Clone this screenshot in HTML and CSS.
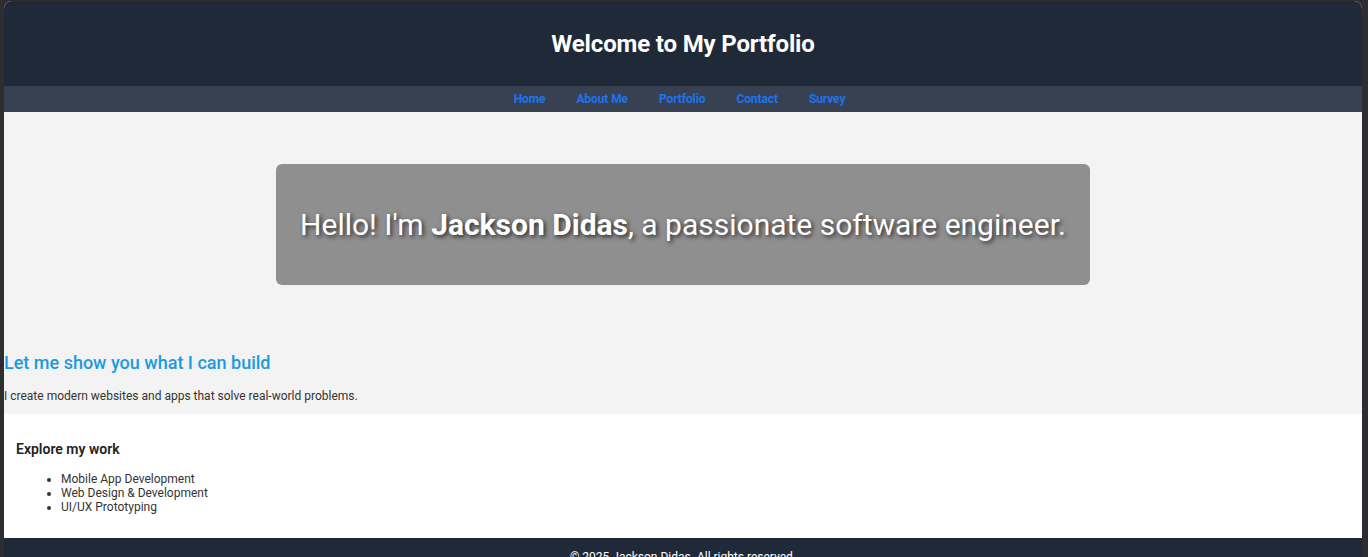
FILE: index.html
```html
<!DOCTYPE html>
<html lang="en">
<head>
<meta charset="utf-8">
<title>Jackson Didas Portfolio</title>
<link rel="stylesheet" href="styles.css">
</head>
<body>
<div class="page">
  <header class="site-header">
    <h1>Welcome to My Portfolio</h1>
  </header>
  <nav class="site-nav">
    <a href="#">Home</a>
    <a href="#">About Me</a>
    <a href="#">Portfolio</a>
    <a href="#">Contact</a>
    <a href="#">Survey</a>
  </nav>
  <main class="intro">
    <div class="hero">
      <p>Hello! I'm <strong>Jackson Didas</strong>, a passionate software engineer.</p>
    </div>
    <h2 class="intro-title">Let me show you what I can build</h2>
    <p class="intro-text">I create modern websites and apps that solve real-world problems.</p>
  </main>
  <section class="work">
    <h3>Explore my work</h3>
    <ul>
      <li>Mobile App Development</li>
      <li>Web Design &amp; Development</li>
      <li>UI/UX Prototyping</li>
    </ul>
  </section>
  <footer class="site-footer">
    <p>&copy; 2025 Jackson Didas. All rights reserved.</p>
  </footer>
</div>
</body>
</html>
```

FILE: styles.css
```css
html, body {
  margin: 0;
  padding: 0;
  height: 100%;
  overflow: hidden;
}
body {
  background: #2e2e30;
  font-family: Roboto, "Liberation Sans", Arial, sans-serif;
  padding: 1px 6px 0 4px;
  box-sizing: border-box;
}
.page {
  background: #ffffff;
  border-radius: 8px 8px 0 0;
  overflow: hidden;
  min-height: 600px;
}
.site-header {
  background: #1f2937;
  height: 85px;
  display: flex;
  align-items: center;
  justify-content: center;
}
.site-header h1 {
  margin: 0;
  color: #ffffff;
  font-size: 24px;
  font-weight: 700;
  letter-spacing: -0.15px;
  padding-top: 1px;
}
.site-nav {
  background: #374151;
  height: 26px;
  display: flex;
  align-items: center;
  justify-content: center;
  gap: 31px;
  padding-right: 7px;
}
.site-nav a {
  color: #1e73f0;
  font-size: 12px;
  font-weight: 700;
  letter-spacing: -0.1px;
  text-decoration: none;
}
.intro {
  background: #f3f3f3;
  padding: 52px 0 11px;
}
.hero {
  width: 60%;
  margin: 0 auto;
  background: #8f8f8f;
  border-radius: 6px;
  height: 121px;
  display: flex;
  align-items: center;
  justify-content: center;
}
.hero p {
  margin: 0;
  color: #ffffff;
  font-size: 30px;
  text-shadow: 2px 2px 4px rgba(0, 0, 0, 0.7);
}
.hero strong {
  font-weight: 700;
}
.intro-title {
  margin: 67px 0 0;
  color: #1a9be0;
  font-size: 18px;
  font-weight: 500;
  line-height: 22px;
}
.intro-text {
  margin: 15px 0 0;
  font-size: 12px;
  line-height: 14px;
  color: #333333;
}
.work {
  background: #ffffff;
  padding: 27px 12px 24px;
}
.work h3 {
  margin: 0;
  font-size: 14px;
  font-weight: 600;
  color: #222222;
  line-height: 16px;
}
.work ul {
  margin: 15px 0 0;
  padding-left: 45px;
  font-size: 12px;
  line-height: 14px;
  color: #333333;
}
.site-footer {
  background: #1f2937;
  color: #ffffff;
  text-align: center;
  height: 60px;
}
.site-footer p {
  margin: 0;
  padding-top: 12px;
  font-size: 12px;
}
```
